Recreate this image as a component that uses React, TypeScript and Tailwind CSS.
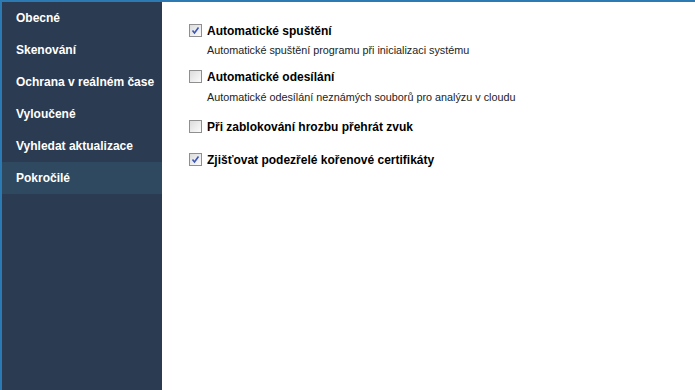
import React from 'react'

const navItems = [
  'Obecné',
  'Skenování',
  'Ochrana v reálném čase',
  'Vyloučené',
  'Vyhledat aktualizace',
  'Pokročilé',
]

function Checkbox({ checked }: { checked: boolean }) {
  return (
    <span className="w-[13px] h-[13px] shrink-0 border border-[#8f8f8f] bg-gradient-to-br from-[#dcdcdc] to-[#fbfbfb] flex items-center justify-center">
      {checked && (
        <svg width="9" height="9" viewBox="0 0 9 9">
          <path d="M1.5 4.5 L3.5 7 L7.5 1.5" fill="none" stroke="#3b55b8" strokeWidth="1.6" />
        </svg>
      )}
    </span>
  )
}

function Option({ label, checked }: { label: string; checked: boolean }) {
  return (
    <label className="flex items-center gap-[5px] h-[13px]">
      <Checkbox checked={checked} />
      <span className="font-bold text-[12px] text-black whitespace-nowrap">{label}</span>
    </label>
  )
}

function Desc({ children }: { children: React.ReactNode }) {
  return <div className="pl-[18px] text-[10.8px] text-[#222] leading-[13px] whitespace-nowrap">{children}</div>
}

export default function App() {
  return (
    <div
      className="w-[695px] h-[390px] flex border-t-2 border-l-2 border-[#2c7ab3] bg-white overflow-hidden"
      style={{ fontFamily: '"Liberation Sans", Arial, sans-serif' }}
    >
      <nav className="w-[160px] bg-[#2b3b51] flex flex-col">
        {navItems.map((item) => (
          <div
            key={item}
            className={`h-[32px] flex items-center pl-[14px] text-[12px] font-bold text-white whitespace-nowrap ${
              item === 'Pokročilé' ? 'bg-[#2f4a60]' : ''
            }`}
          >
            {item}
          </div>
        ))}
      </nav>
      <main className="flex-1 pl-[27px] pt-[22px] flex flex-col">
        <Option label="Automatické spuštění" checked />
        <div className="mt-[7px]">
          <Desc>Automatické spuštění programu při inicializaci systému</Desc>
        </div>
        <div className="mt-[13px]">
          <Option label="Automatické odesílání" checked={false} />
        </div>
        <div className="mt-[8px]">
          <Desc>Automatické odesílání neznámých souborů pro analýzu v cloudu</Desc>
        </div>
        <div className="mt-[16px]">
          <Option label="Při zablokování hrozbu přehrát zvuk" checked={false} />
        </div>
        <div className="mt-[20px]">
          <Option label="Zjišťovat podezřelé kořenové certifikáty" checked />
        </div>
      </main>
    </div>
  )
}
